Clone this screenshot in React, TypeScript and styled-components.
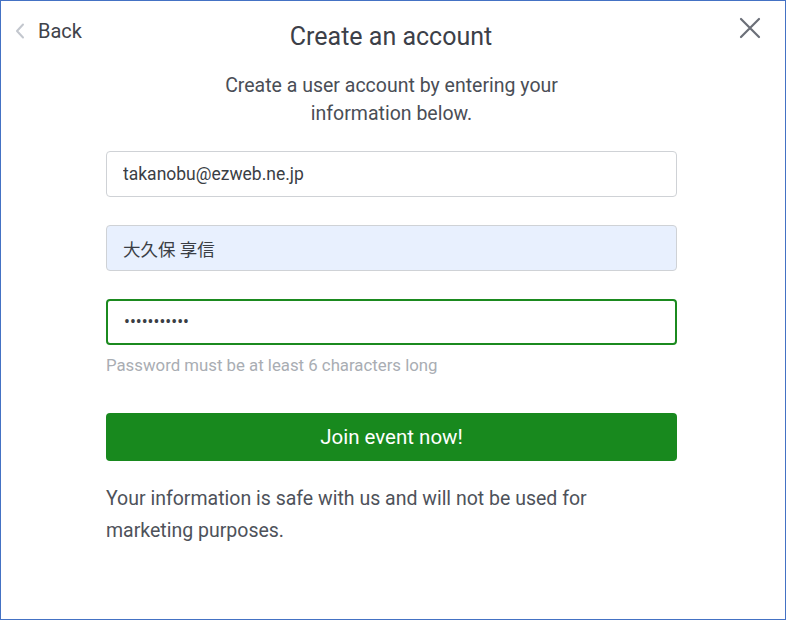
import styled, { createGlobalStyle } from "styled-components"

const GlobalStyle = createGlobalStyle`
  html, body {
    margin: 0;
    padding: 0;
    background: #fff;
  }
  * {
    box-sizing: border-box;
  }
`

const App = () => {
  return (
    <>
      <GlobalStyle />
      <Frame>
        <Header>
          <BackLink>
            <svg width="12" height="16" viewBox="0 0 12 16">
              <path d="M9 1.5 L3 8 L9 14.5" fill="none" stroke="#c3c7ce" strokeWidth="2" strokeLinecap="round" strokeLinejoin="round" />
            </svg>
            <span>Back</span>
          </BackLink>
          <Title>Create an account</Title>
          <CloseButton aria-label="Close">
            <svg width="22" height="22" viewBox="0 0 22 22">
              <path d="M2 2 L20 20 M20 2 L2 20" stroke="#6b6f78" strokeWidth="2.2" strokeLinecap="round" />
            </svg>
          </CloseButton>
        </Header>
        <Form>
          <Intro>Create a user account by entering your<br />information below.</Intro>
          <Field type="email" defaultValue="takanobu@ezweb.ne.jp" />
          <Field type="text" defaultValue="大久保 享信" $filled />
          <FieldGroup>
            <Field type="password" defaultValue="abcdefghijk" $active />
            <Hint>Password must be at least 6 characters long</Hint>
          </FieldGroup>
          <SubmitButton>Join event now!</SubmitButton>
          <Note>Your information is safe with us and will not be used for<br />marketing purposes.</Note>
        </Form>
      </Frame>
    </>
  )
}

const Frame = styled.div`
  width: 786px;
  height: 620px;
  border: 1px solid #4472c4;
  font-family: Roboto, "Noto Sans CJK JP", sans-serif;
  color: #454a52;
  background: #fff;
`

const Header = styled.div`
  display: grid;
  grid-template-columns: 1fr auto 1fr;
  align-items: center;
  padding: 13px 17px 0 13px;
  height: 58px;
`

const BackLink = styled.a`
  display: flex;
  align-items: center;
  gap: 12px;
  font-size: 20px;
  color: #3f434a;
  cursor: pointer;
  align-self: start;
  padding-top: 5px;
`

const Title = styled.h1`
  margin: 0;
  font-size: 25px;
  font-weight: 400;
  color: #3c4048;
`

const CloseButton = styled.button`
  justify-self: end;
  align-self: start;
  background: none;
  border: none;
  padding: 0;
  margin: 3px 7px 0 0;
  width: 22px;
  height: 22px;
  cursor: pointer;
`

const Form = styled.div`
  width: 571px;
  margin-left: 105px;
  display: flex;
  flex-direction: column;
`

const Intro = styled.p`
  margin: 13px 0 23px;
  text-align: center;
  font-size: 19.5px;
  line-height: 28px;
  color: #4a4e56;
`

const FieldGroup = styled.div`
  display: flex;
  flex-direction: column;
`

const Field = styled.input<{ $filled?: boolean; $active?: boolean }>`
  width: 100%;
  height: 46px;
  margin-bottom: 28px;
  padding: 0 16px;
  font-family: Roboto, "Noto Sans CJK JP", sans-serif;
  font-size: 17.5px;
  color: #3a3e45;
  background: ${p => (p.$filled ? "#e8f0fe" : "#fff")};
  border: ${p => (p.$active ? "2px solid #1b8a1f" : "1px solid #cfd2d6")};
  border-radius: 4px;
  outline: none;

  ${FieldGroup} & {
    margin-bottom: 10px;
  }
`

const Hint = styled.div`
  font-size: 16.8px;
  color: #a9adb3;
  margin-bottom: 38px;
`

const SubmitButton = styled.button`
  height: 48px;
  background: #18891e;
  color: #fff;
  border: none;
  border-radius: 4px;
  font-family: Roboto, sans-serif;
  font-size: 20.5px;
  cursor: pointer;
`

const Note = styled.p`
  margin: 22px 0 0;
  font-size: 19.5px;
  line-height: 32px;
  color: #4e525a;
`

export default App
